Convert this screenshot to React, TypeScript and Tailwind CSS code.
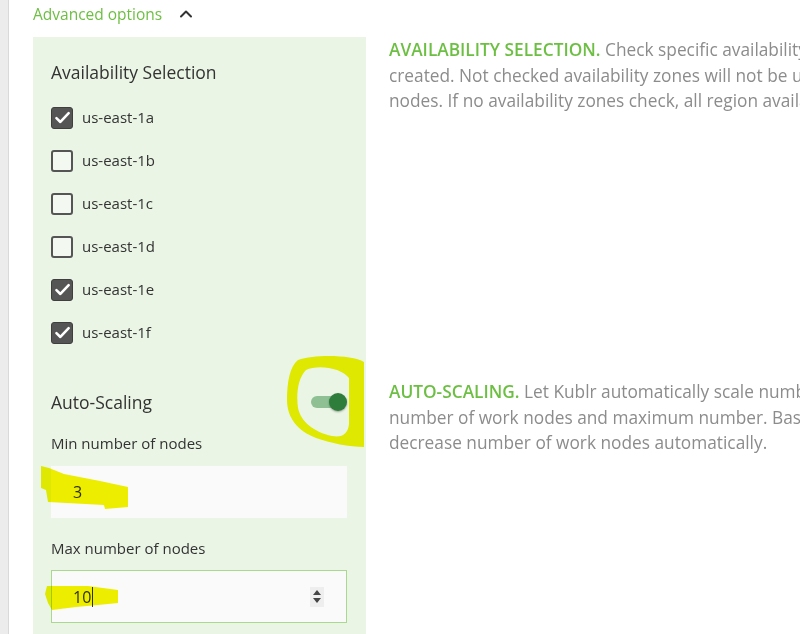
import { ChevronUp } from "lucide-react";

type Zone = { name: string; checked: boolean };

const zones: Zone[] = [
  { name: "us-east-1a", checked: true },
  { name: "us-east-1b", checked: false },
  { name: "us-east-1c", checked: false },
  { name: "us-east-1d", checked: false },
  { name: "us-east-1e", checked: true },
  { name: "us-east-1f", checked: true },
];

function Checkbox({ checked }: { checked: boolean }) {
  if (checked) {
    return (
      <span className="flex h-[22px] w-[22px] items-center justify-center rounded-[3px] border border-[#3f3f3f] bg-[#555555]">
        <svg width="17" height="17" viewBox="0 0 16 16" fill="none">
          <path
            d="M2.3 8.6l3.7 3.6L13.8 3.9"
            stroke="#ffffff"
            strokeWidth="2.4"
            strokeLinecap="round"
            strokeLinejoin="round"
          />
        </svg>
      </span>
    );
  }

  return (
    <span className="h-[22px] w-[22px] rounded-[3px] border-2 border-[#555555] bg-[#f3f9f0]" />
  );
}

function Description({ title, lines }: { title: string; lines: string[] }) {
  return (
    <div className="min-w-0 flex-1 overflow-hidden pl-[23px] text-[17.3px] leading-[25.5px] text-[#8c8c8c]">
      {lines.map((line, index) => (
        <div key={line} className="whitespace-nowrap">
          {index === 0 ? (
            <span className="font-semibold text-[#6dbf43]">{title} </span>
          ) : null}
          {line}
        </div>
      ))}
    </div>
  );
}

function Highlights() {
  return (
    <svg
      className="pointer-events-none absolute inset-0 mix-blend-multiply"
      width="800"
      height="634"
      viewBox="0 0 800 634"
    >
      <path
        d="M298 360 C316 354 352 355 364 362 L364 447 C350 447 330 443 316 438 C298 431 287 418 287 400 C287 382 290 366 298 360 Z M306 370 C298 378 296 394 298 408 C301 422 314 432 332 436 C342 438 348 434 349 424 L349 378 C342 368 318 364 306 370 Z"
        fill="#f2f200"
        fillRule="evenodd"
      />
      <path
        d="M41 466 L49 468 L64 474 L100 481 L128 487 L128 507 L105 509 L104 505 L48 502 L46 490 L41 488 Z"
        fill="#f2f200"
      />
      <path
        d="M47 586 L88 586 L118 590 L118 603 L98 605 L76 607 L52 610 L48 603 L45 594 Z"
        fill="#f2f200"
      />
    </svg>
  );
}

export default function App() {
  return (
    <div className="relative flex h-[634px] w-[800px] overflow-hidden bg-white font-['Open_Sans',sans-serif] text-[#333333]">
      <div className="w-[9px] shrink-0 border-r border-[#d9d9d9] bg-[#ececec]" />

      <div className="flex min-w-0 flex-1 flex-col pl-[24px]">
        <div className="flex h-[37px] items-start gap-[14px] pt-[3px]">
          <span className="text-[15.5px] leading-[22px] text-[#6dbf43]">
            Advanced options
          </span>
          <ChevronUp className="mt-[1px] h-[20px] w-[20px] text-[#333333]" strokeWidth={2.4} />
        </div>

        <div className="flex">
          <div className="w-[333px] shrink-0 bg-[#eaf5e5] pb-[25px] pl-[18px] pr-[19px] pt-[23px]">
            <h3 className="text-[17.5px] leading-[24px] text-[#333333]">
              Availability Selection
            </h3>
            <div className="mt-[12px] flex flex-col">
              {zones.map((zone) => (
                <label key={zone.name} className="flex h-[43px] items-center gap-[9px]">
                  <Checkbox checked={zone.checked} />
                  <span className="text-[15px] text-[#333333]">{zone.name}</span>
                </label>
              ))}
            </div>
          </div>
          <Description
            title="AVAILABILITY SELECTION."
            lines={[
              "Check specific availability zones where work nodes will be",
              "created. Not checked availability zones will not be used for placing work",
              "nodes. If no availability zones check, all region availability zones will be used.",
            ]}
          />
        </div>

        <div className="flex flex-1">
          <div className="w-[333px] shrink-0 bg-[#eaf5e5] pl-[18px] pr-[19px] pt-[11px]">
            <div className="flex h-[24px] items-center justify-between">
              <span className="text-[17.5px] leading-[24px] text-[#333333]">Auto-Scaling</span>
              <span className="relative h-[18px] w-[36px]">
                <span className="absolute left-0 top-[3px] h-[12px] w-[30px] rounded-full bg-[#8fc094]" />
                <span className="absolute left-[18px] top-0 h-[18px] w-[18px] rounded-full bg-[#2e7d3a] shadow-[0_1px_2px_rgba(0,0,0,0.35)]" />
              </span>
            </div>

            <div className="mt-[18px] text-[15px] leading-[22px] text-[#333333]">
              Min number of nodes
            </div>
            <div className="mt-[12px] flex h-[52px] items-center bg-[#fafafa] pl-[22px] text-[16px]">
              3
            </div>

            <div className="mt-[19px] text-[15px] leading-[22px] text-[#333333]">
              Max number of nodes
            </div>
            <div className="mt-[11px] flex h-[53px] items-center justify-between border border-[#a8d98e] bg-[#fafafa] pl-[21px] pr-[22px] text-[16px]">
              <span className="flex items-center">
                10
                <span className="ml-[1px] h-[20px] w-px bg-[#333333]" />
              </span>
              <span className="flex h-[20px] w-[14px] flex-col items-center justify-center gap-[3px] bg-[#eeeeee]">
                <span className="h-0 w-0 border-x-[4px] border-b-[5px] border-x-transparent border-b-[#444444]" />
                <span className="h-0 w-0 border-x-[4px] border-t-[5px] border-x-transparent border-t-[#444444]" />
              </span>
            </div>
          </div>
          <Description
            title="AUTO-SCALING."
            lines={[
              "Let Kublr automatically scale number of work nodes between minimum",
              "number of work nodes and maximum number. Based on load Kublr will increase or",
              "decrease number of work nodes automatically.",
            ]}
          />
        </div>
      </div>

      <Highlights />
    </div>
  );
}
